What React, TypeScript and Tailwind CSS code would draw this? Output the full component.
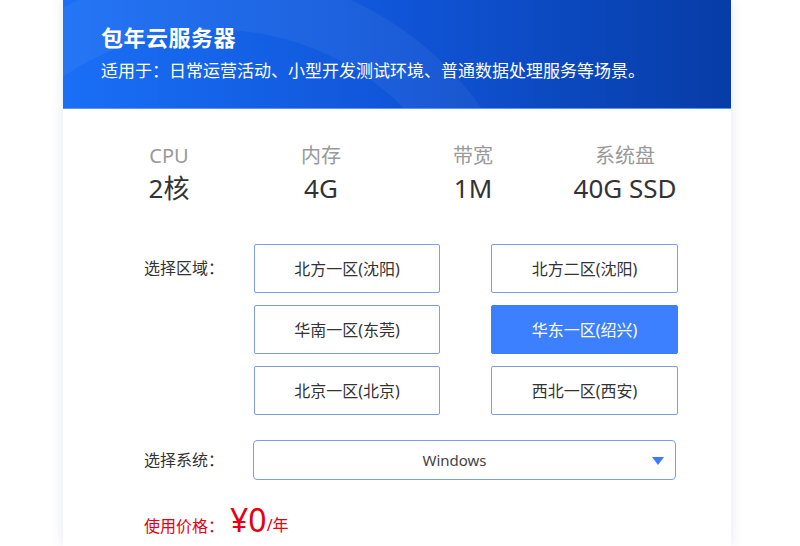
import { useState } from "react";

const specs = [
  { label: "CPU", value: "2核" },
  { label: "内存", value: "4G" },
  { label: "带宽", value: "1M" },
  { label: "系统盘", value: "40G SSD" },
];

const regions = [
  "北方一区(沈阳)",
  "北方二区(沈阳)",
  "华南一区(东莞)",
  "华东一区(绍兴)",
  "北京一区(北京)",
  "西北一区(西安)",
];

const font = { fontFamily: '"Noto Sans", "Noto Sans CJK SC", sans-serif' };

export default function App() {
  const [region, setRegion] = useState("华东一区(绍兴)");

  return (
    <div className="w-[800px] h-[546px] bg-white overflow-hidden" style={font}>
      <div className="ml-[63px] w-[668px] h-full bg-white shadow-[0_0_12px_rgba(40,60,120,0.12)]">
        {/* header banner */}
        <div className="relative h-[109px] overflow-hidden border-b border-[#5d95f6] bg-gradient-to-r from-[#1a6ff6] via-[#1055d8] to-[#073ca6] pl-[38px] pt-[21px]">
          <svg className="absolute inset-0 w-full h-full" viewBox="0 0 668 109" fill="none">
            <circle cx="150" cy="300" r="300" stroke="#ffffff" strokeOpacity="0.05" strokeWidth="60" />
            <circle cx="270" cy="330" r="170" stroke="#ffffff" strokeOpacity="0.05" strokeWidth="40" />
          </svg>
          <div className="relative text-[22px] font-bold text-white leading-[32px] tracking-[0.5px]">包年云服务器</div>
          <div className="relative mt-[6px] text-[17px] text-white leading-[24px]">
            适用于：日常运营活动、小型开发测试环境、普通数据处理服务等场景。
          </div>
        </div>

        {/* specs */}
        <div className="grid grid-cols-4 px-[30px] pt-[34px]">
          {specs.map((s) => (
            <div key={s.label} className="flex flex-col items-center">
              <span className="text-[20px] leading-[26px] text-[#999]">{s.label}</span>
              <span className="mt-[3px] text-[26px] leading-[32px] text-[#333]">{s.value}</span>
            </div>
          ))}
        </div>

        {/* region */}
        <div className="flex mt-[40px] pl-[81px]">
          <div className="w-[110px] pt-[12px] text-[16px] leading-[24px] text-[#333]">选择区域：</div>
          <div className="grid grid-cols-[186px_187px] gap-x-[51px] gap-y-[12px]">
            {regions.map((r) => {
              const active = r === region;
              return (
                <button
                  key={r}
                  onClick={() => setRegion(r)}
                  className={
                    active
                      ? "h-[49px] rounded-[2px] bg-[#3c7fff] border border-[#3c7fff] text-white text-[16px]"
                      : "h-[49px] rounded-[2px] bg-white border border-[#7d9fe0] text-[#333] text-[16px]"
                  }
                >
                  {r}
                </button>
              );
            })}
          </div>
        </div>

        {/* system */}
        <div className="flex items-center mt-[25px] pl-[81px]">
          <div className="w-[109px] text-[16px] leading-[24px] text-[#333]">选择系统：</div>
          <div className="relative w-[423px] h-[40px] rounded-[4px] border border-[#7d9fe0] flex items-center justify-center pr-[20px] text-[15px] text-[#444]">
            Windows
            <svg className="absolute right-[11px] top-[16px]" width="12" height="8" viewBox="0 0 12 8">
              <path d="M0 0 H12 L6 8 Z" fill="#3b7bff" />
            </svg>
          </div>
        </div>

        {/* price */}
        <div className="flex items-end mt-[22px] pl-[81px] text-[#e60012]">
          <span className="text-[16px] leading-[24px]">使用价格：</span>
          <span className="ml-[6px] text-[32px] leading-[36px]">¥0</span>
          <span className="text-[16px] leading-[26px]">/年</span>
        </div>
      </div>
    </div>
  );
}
